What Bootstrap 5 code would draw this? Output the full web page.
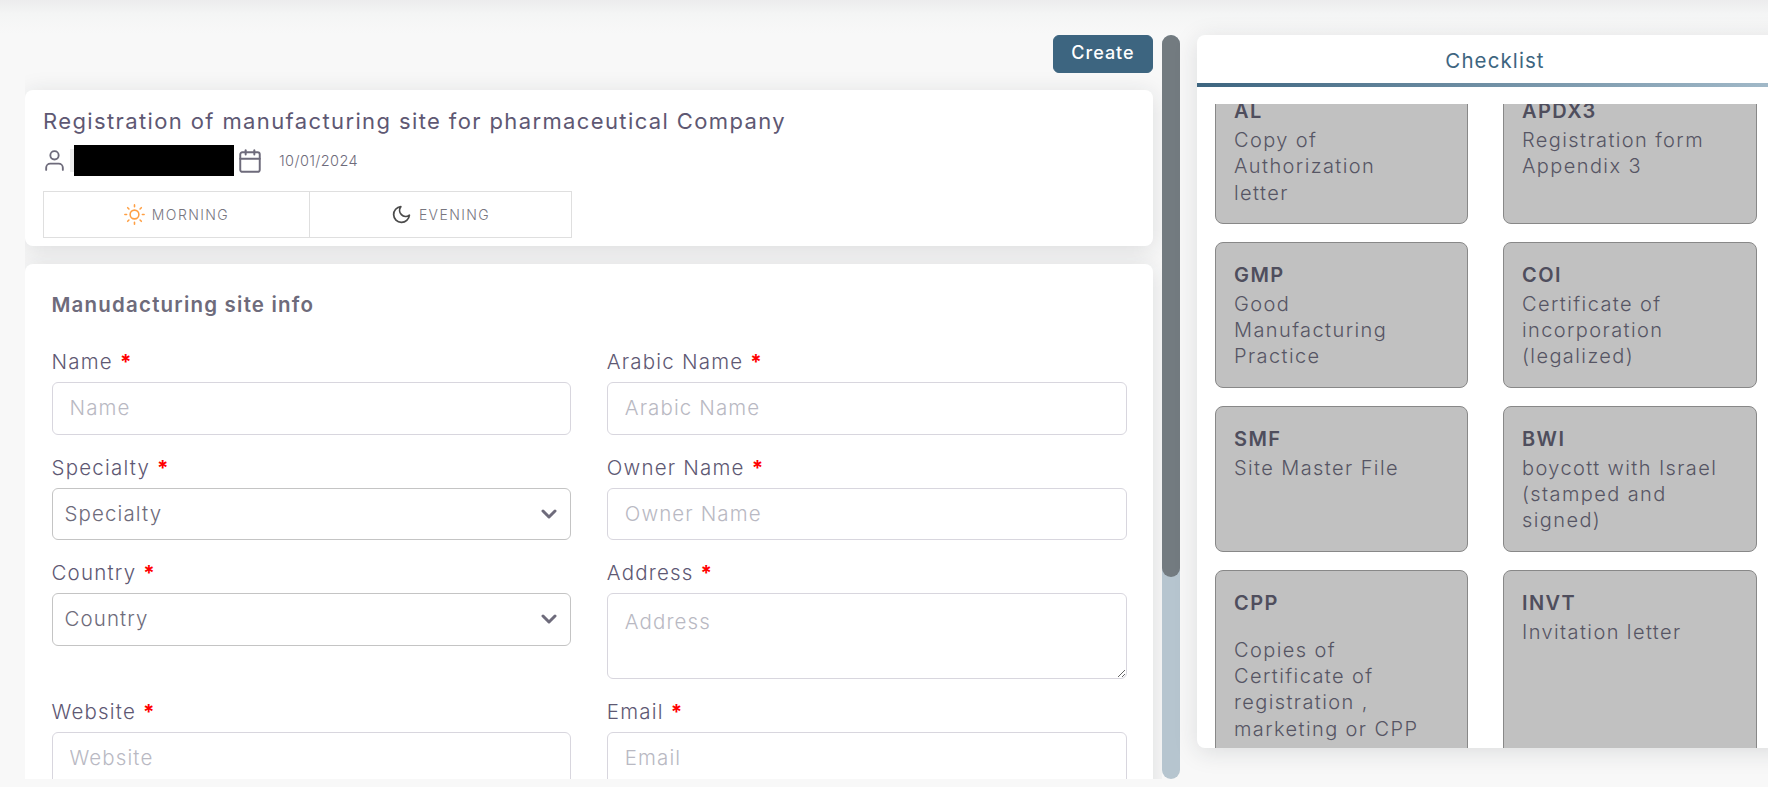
<!DOCTYPE html>
<html lang="en">
<head>
  <meta charset="UTF-8" />
  <meta name="viewport" content="width=device-width, initial-scale=1.0" />
  <title>Registration of manufacturing site</title>
  <link href="https://cdn.jsdelivr.net/npm/bootstrap@5.3.3/dist/css/bootstrap.min.css" rel="stylesheet">
  <style>
    html, body {
      height: 100%;
      overflow: hidden;
    }
    body {
      background: linear-gradient(#ececed, #f4f5f5 14px, #f8f8f8 34px);
      font-family: 'Inter', 'Liberation Sans', sans-serif;
      color: #5e5873;
    }
    .page-wrap {
      padding: 35px 0 8px 25px;
      height: 100vh;
    }
    .left-pane {
      width: 1137px;
      flex: none;
      overflow-y: scroll;
      scrollbar-width: none;
      padding-right: 9px;
    }
    .pane-track {
      width: 18px;
      flex: none;
      background: #b6c5cf;
      border-radius: 9px;
    }
    .pane-thumb {
      background: #737b80;
      border-radius: 9px;
    }
    .btn-create {
      background-color: #3d6580;
      border-color: #3d6580;
      color: #fff;
      font-weight: 500;
      font-size: 18px;
      letter-spacing: 1px;
      width: 100px;
      height: 38px;
      padding: 0 0 3px;
      border-radius: 6px;
      margin-bottom: 17px;
    }
    .white-box {
      background: #fff;
      border: 0;
      border-radius: 8px;
      box-shadow: 0 4px 24px rgba(34, 41, 47, .13);
    }
    .info-box {
      height: 156px;
      padding: 16px 18px 0;
      margin-bottom: 18px;
    }
    .info-title {
      font-size: 22px;
      font-weight: 400;
      line-height: 30px;
      margin: 0 0 9px;
      color: #5e5873;
      letter-spacing: 1.38px;
      white-space: nowrap;
    }
    .meta-row {
      height: 31px;
      font-size: 14.5px;
      color: #6e6b7b;
      font-weight: 300;
    }
    .meta-row svg:first-child {
      margin-left: -1px;
    }
    .name-ghost {
      width: 4px;
      height: 23px;
      margin-left: 3px;
      background: #ececec;
    }
    .redacted {
      width: 160px;
      height: 31px;
      background: #000;
      margin-right: 3px;
    }
    .date-text {
      margin-left: 16px;
      letter-spacing: .4px;
    }
    .shift-tabs {
      width: 529px;
      height: 47px;
      margin-top: 15px;
      border: 1px solid #dfdfdf;
    }
    .shift-tab {
      flex: 1 1 0;
      gap: 7px;
      font-size: 14px;
      font-weight: 300;
      color: #77767f;
      letter-spacing: 1.4px;
      text-transform: uppercase;
    }
    .shift-tab:first-child {
      flex: 0 0 265px;
    }
    .shift-tab + .shift-tab {
      border-left: 1px solid #dfdfdf;
    }
    .form-box {
      min-height: 792px;
      padding: 27px 26.5px;
    }
    .form-heading {
      font-size: 20.5px;
      font-weight: 600;
      line-height: 28px;
      color: #6e6b7b;
      margin-bottom: 29px;
      letter-spacing: 1.2px;
    }
    .form-box .row {
      --bs-gutter-x: 35.5px;
    }
    .field {
      margin-bottom: 19px;
    }
    .field .form-label {
      font-size: 20.5px;
      font-weight: 300;
      line-height: 28px;
      margin-bottom: 6px;
      color: #5e5873;
      letter-spacing: 1.2px;
    }
    .req {
      color: #f00;
      font-weight: 700;
    }
    .field .form-control,
    .field .form-select {
      height: 52.5px;
      font-size: 20.5px;
      font-weight: 300;
      letter-spacing: 1.1px;
      color: #6e6b7b;
      border-color: #d8d6de;
      border-radius: 6px;
    }
    .field .form-control {
      padding: 6px 12px 7px 17px;
    }
    .field .form-select {
      padding: 7px 36px 6px 12px;
      border-color: #c4c4c4;
      background-image: url("data:image/svg+xml,%3csvg xmlns='http://www.w3.org/2000/svg' viewBox='0 0 16 16'%3e%3cpath fill='none' stroke='%236e6b7b' stroke-linecap='round' stroke-linejoin='round' stroke-width='3' d='M2 5l6 6 6-6'/%3e%3c/svg%3e");
      background-position: right 13px center;
      background-size: 16px 16px;
    }
    .field textarea.form-control {
      height: 86px;
      padding-top: 13px;
    }
    .field .form-control::placeholder {
      color: #b9b9c3;
    }
    .check-box {
      width: 596px;
      height: 713px;
      flex: none;
      margin-left: 17px;
      border-radius: 8px;
      overflow: hidden;
    }
    .check-title {
      height: 48px;
      padding-top: 10px;
      text-align: center;
      font-size: 20.5px;
      line-height: 32px;
      letter-spacing: 1.1px;
      color: #3d6580;
    }
    .check-line {
      height: 4px;
      background: linear-gradient(90deg, #3d6580, #a5bccb);
    }
    .check-scroll {
      margin-top: 17px;
      height: 644px;
      overflow: hidden;
      padding-left: 18px;
    }
    .check-grid {
      width: 542px;
      display: grid;
      grid-template-columns: 253px 254px;
      column-gap: 35px;
      row-gap: 18px;
    }
    .check-item {
      background: #c1c1c1;
      border: 1px solid #888;
      border-radius: 8px;
      padding: 17px 33px 17px 18px;
      color: #565564;
      font-size: 20px;
      font-weight: 300;
      line-height: 26.3px;
      letter-spacing: 1.4px;
    }
    .check-code {
      font-weight: 600;
      line-height: 31px;
      color: #4f4e5d;
    }
    .check-gap {
      margin-top: 18px;
    }
  </style>
</head>
<body>
  <div class="page-wrap d-flex">

    <div class="left-pane" id="leftPane">
      <div class="text-end">
        <button type="button" class="btn btn-create">Create</button>
      </div>

      <div class="white-box info-box">
        <h5 class="info-title">Registration of manufacturing site for pharmaceutical Company</h5>
        <div class="meta-row d-flex align-items-center">
          <svg width="25" height="25" viewBox="0 0 24 24" fill="none" stroke="#6e6b7b" stroke-width="1.8" stroke-linecap="round" stroke-linejoin="round"><path d="M20 21v-2a4 4 0 0 0-4-4H8a4 4 0 0 0-4 4v2"/><circle cx="12" cy="7" r="4"/></svg>
          <div class="name-ghost"></div>
          <div class="redacted"></div>
          <svg width="26" height="26" viewBox="0 0 24 24" fill="none" stroke="#6e6b7b" stroke-width="1.8" stroke-linecap="round" stroke-linejoin="round"><rect x="3" y="4" width="18" height="18" rx="2" ry="2"/><line x1="16" y1="2" x2="16" y2="6"/><line x1="8" y1="2" x2="8" y2="6"/><line x1="3" y1="10" x2="21" y2="10"/></svg>
          <span class="date-text">10/01/2024</span>
        </div>
        <div class="shift-tabs d-flex">
          <div class="shift-tab d-flex align-items-center justify-content-center">
            <svg width="21" height="21" viewBox="0 0 24 24" fill="none" stroke="#ff9f43" stroke-width="1.8" stroke-linecap="round" stroke-linejoin="round"><circle cx="12" cy="12" r="5"/><line x1="12" y1="1" x2="12" y2="3"/><line x1="12" y1="21" x2="12" y2="23"/><line x1="4.22" y1="4.22" x2="5.64" y2="5.64"/><line x1="18.36" y1="18.36" x2="19.78" y2="19.78"/><line x1="1" y1="12" x2="3" y2="12"/><line x1="21" y1="12" x2="23" y2="12"/><line x1="4.22" y1="19.78" x2="5.64" y2="18.36"/><line x1="18.36" y1="5.64" x2="19.78" y2="4.22"/></svg>
            Morning
          </div>
          <div class="shift-tab d-flex align-items-center justify-content-center">
            <svg width="21" height="21" viewBox="0 0 24 24" fill="none" stroke="#4b4b4b" stroke-width="2" stroke-linecap="round" stroke-linejoin="round"><path d="M21 12.79A9 9 0 1 1 11.21 3 7 7 0 0 0 21 12.79z"/></svg>
            Evening
          </div>
        </div>
      </div>

      <div class="white-box form-box">
        <div class="form-heading">Manudacturing site info</div>
        <form autocomplete="off">
          <div class="row">
            <div class="col-6 field">
              <label class="form-label" for="name">Name <span class="req">*</span></label>
              <input type="text" class="form-control" id="name" placeholder="Name">
            </div>
            <div class="col-6 field">
              <label class="form-label" for="arabicName">Arabic Name <span class="req">*</span></label>
              <input type="text" class="form-control" id="arabicName" placeholder="Arabic Name">
            </div>
            <div class="col-6 field">
              <label class="form-label" for="specialty">Specialty <span class="req">*</span></label>
              <select class="form-select" id="specialty"><option>Specialty</option></select>
            </div>
            <div class="col-6 field">
              <label class="form-label" for="ownerName">Owner Name <span class="req">*</span></label>
              <input type="text" class="form-control" id="ownerName" placeholder="Owner Name">
            </div>
            <div class="col-6 field">
              <label class="form-label" for="country">Country <span class="req">*</span></label>
              <select class="form-select" id="country"><option>Country</option></select>
            </div>
            <div class="col-6 field">
              <label class="form-label" for="address">Address <span class="req">*</span></label>
              <textarea class="form-control" id="address" placeholder="Address"></textarea>
            </div>
            <div class="col-6 field">
              <label class="form-label" for="website">Website <span class="req">*</span></label>
              <input type="text" class="form-control" id="website" placeholder="Website">
            </div>
            <div class="col-6 field">
              <label class="form-label" for="email">Email <span class="req">*</span></label>
              <input type="email" class="form-control" id="email" placeholder="Email">
            </div>
          </div>
        </form>
      </div>
    </div>

    <div class="pane-track">
      <div class="pane-thumb" id="paneThumb"></div>
    </div>

    <div class="white-box check-box">
      <div class="check-title">Checklist</div>
      <div class="check-line"></div>
      <div class="check-scroll" id="checkScroll">
        <div class="check-grid">
          <div class="check-item"><div class="check-code">AL</div>Copy of Authorization letter</div>
          <div class="check-item"><div class="check-code">APDX3</div>Registration form Appendix 3</div>
          <div class="check-item"><div class="check-code">GMP</div>Good Manufacturing Practice</div>
          <div class="check-item"><div class="check-code">COI</div>Certificate of incorporation (legalized)</div>
          <div class="check-item"><div class="check-code">SMF</div>Site Master File</div>
          <div class="check-item"><div class="check-code">BWI</div>boycott with Israel (stamped and signed)</div>
          <div class="check-item"><div class="check-code">CPP</div><div class="check-gap">Copies of Certificate of registration , marketing or CPP</div></div>
          <div class="check-item"><div class="check-code">INVT</div>Invitation letter</div>
        </div>
      </div>
    </div>
  </div>

  <script src="https://cdn.jsdelivr.net/npm/bootstrap@5.3.3/dist/js/bootstrap.bundle.min.js"></script>
  <script>
    const pane = document.getElementById('leftPane');
    document.getElementById('paneThumb').style.height = (pane.clientHeight * pane.clientHeight / pane.scrollHeight) + 'px';
    document.getElementById('checkScroll').scrollTop = 26;
  </script>
</body>
</html>
